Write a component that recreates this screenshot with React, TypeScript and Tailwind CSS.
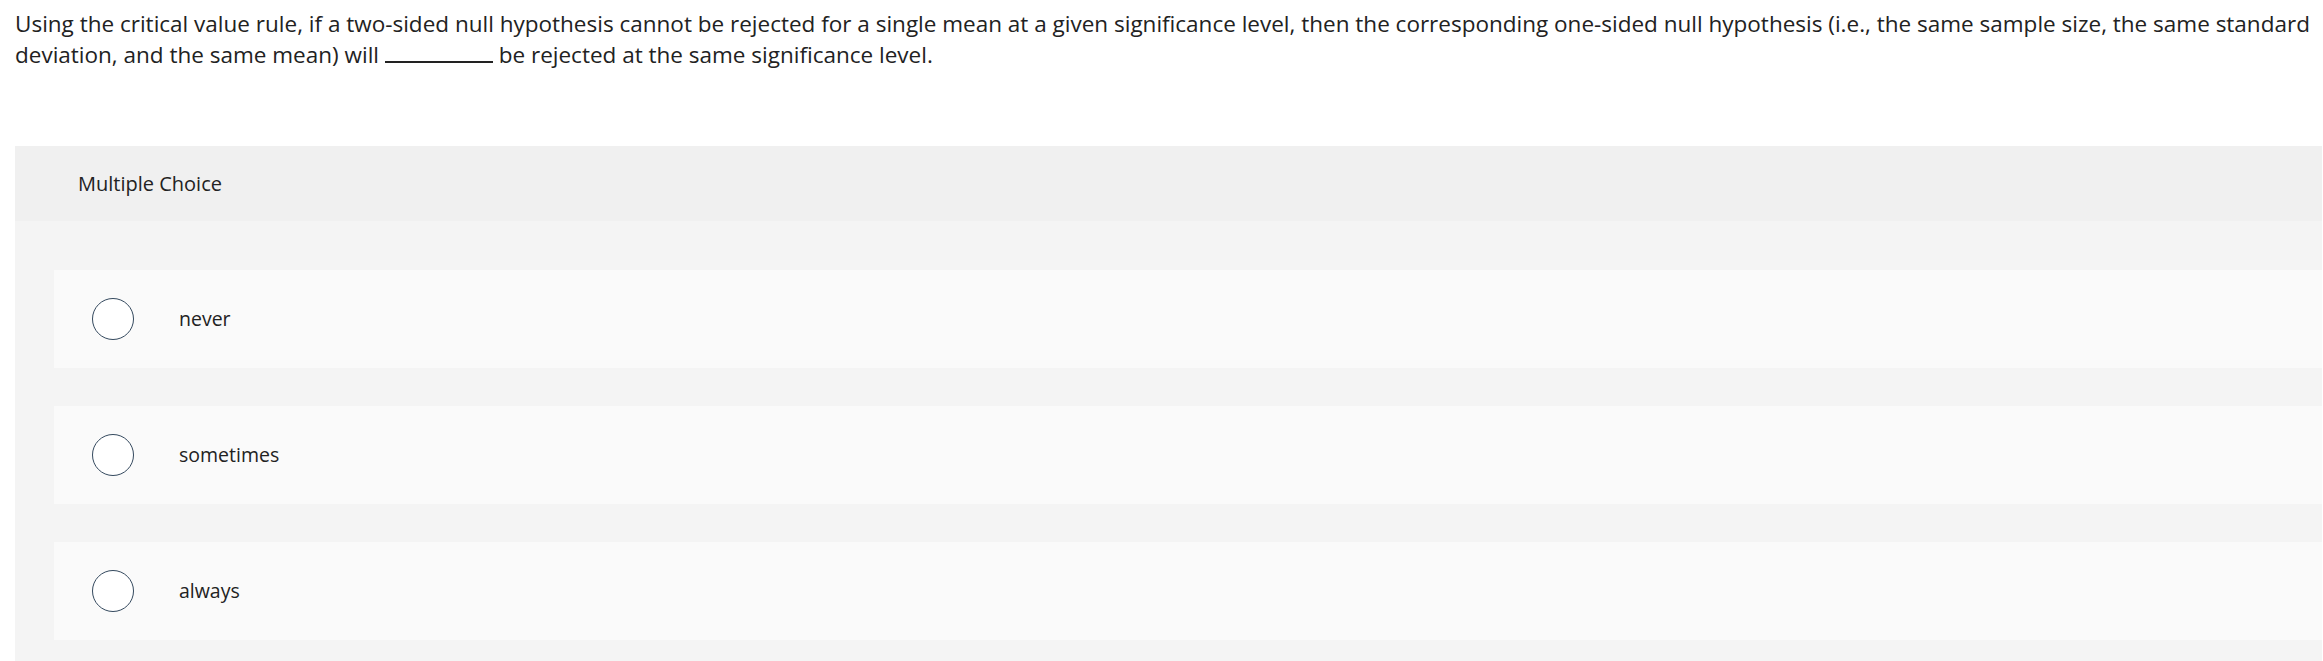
import React from 'react';

const OPTIONS = ['never', 'sometimes', 'always'];

export default function App() {
  return (
    <div className="min-h-[661px] w-full bg-white font-['Open_Sans','Lato',sans-serif] text-[#222]">
      {/* Question prompt */}
      <div className="px-[15px] pt-[8px] text-[22.5px] leading-[31px]">
        <div className="whitespace-nowrap">
          Using the critical value rule, if a two-sided null hypothesis cannot be rejected for a single mean at a given significance level, then the corresponding one-sided null hypothesis (i.e., the same sample size, the same standard
        </div>
        <div className="whitespace-nowrap">
          deviation, and the same mean) will{' '}
          <span className="inline-block w-[108px] border-b-2 border-[#222] align-baseline" />{' '}
          be rejected at the same significance level.
        </div>
      </div>

      {/* Answer panel */}
      <div className="ml-[15px] mr-[1px] mt-[76px] bg-[#f4f4f4]">
        <div className="flex h-[75px] items-center bg-[#f0f0f0] pl-[63px] text-[20px] text-[#222]">
          Multiple Choice
        </div>
        <div className="flex flex-col gap-[38.5px] pb-[22px] pl-[39px] pt-[49px]">
          {OPTIONS.map((opt) => (
            <label
              key={opt}
              className="flex h-[97.5px] cursor-pointer items-center bg-[#fafafa] pl-[38px]"
            >
              <span className="h-[42px] w-[42px] shrink-0 rounded-full border-[1.5px] border-[#34495e] bg-white" />
              <span className="ml-[45px] text-[19.5px] text-[#222]">{opt}</span>
            </label>
          ))}
        </div>
      </div>
    </div>
  );
}
